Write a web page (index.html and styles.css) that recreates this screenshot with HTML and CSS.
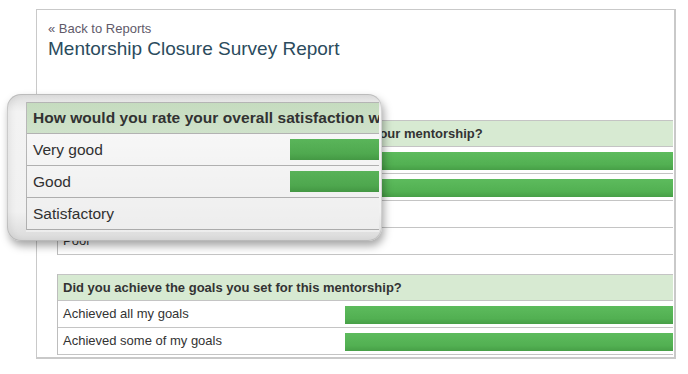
FILE: index.html
```html
<!DOCTYPE html>
<html lang="en">
<head>
  <meta charset="UTF-8">
  <title>Mentorship Closure Survey Report</title>
  <link rel="stylesheet" href="styles.css">
</head>
<body>
  <div class="report">
    <div class="report-head">
      <a class="back-link" href="#">&laquo; Back to Reports</a>
      <h1>Mentorship Closure Survey Report</h1>
    </div>

    <div class="question">
      <div class="question-title">How would you rate your overall satisfaction with your mentorship?</div>
      <div class="answer"><span>Very good</span><div class="bar-track"><div class="bar" style="width:100%"></div></div></div>
      <div class="answer"><span>Good</span><div class="bar-track"><div class="bar" style="width:100%"></div></div></div>
      <div class="answer"><span>Satisfactory</span><div class="bar-track"></div></div>
      <div class="answer"><span>Poor</span><div class="bar-track"></div></div>
    </div>

    <div class="question">
      <div class="question-title">Did you achieve the goals you set for this mentorship?</div>
      <div class="answer"><span>Achieved all my goals</span><div class="bar-track"><div class="bar" style="width:100%"></div></div></div>
      <div class="answer"><span>Achieved some of my goals</span><div class="bar-track"><div class="bar" style="width:100%"></div></div></div>
    </div>
  </div>

  <!-- zoomed callout over the first question -->
  <div class="magnifier">
    <div class="lens">
      <div class="question big">
        <div class="question-title">How would you rate your overall satisfaction with your mentorship?</div>
        <div class="answer"><span>Very good</span><div class="bar-track"><div class="bar" style="width:100%"></div></div></div>
        <div class="answer"><span>Good</span><div class="bar-track"><div class="bar" style="width:100%"></div></div></div>
        <div class="answer"><span>Satisfactory</span><div class="bar-track"></div></div>
      </div>
    </div>
  </div>
</body>
</html>
```

FILE: styles.css
```css
body {
  margin: 0;
  font-family: 'Liberation Sans', Arial, sans-serif;
  background: #fff;
  color: #333;
}

.report {
  box-sizing: border-box;
  width: 640px;
  height: 350px;
  margin: 9px 0 0 36px;
  border: 1px solid #c9c9c9;
  border-right-width: 2px;
  border-bottom-width: 2px;
  background: #fff;
}

.report-head {
  padding: 11px 0 0 11px;
  height: 99px;
}

.back-link {
  display: block;
  font-size: 13px;
  line-height: 15px;
  color: #615a6a;
  text-decoration: none;
}

h1 {
  margin: 2px 0 0;
  font-size: 19px;
  line-height: 22px;
  font-weight: normal;
  color: #2b4b5d;
}

.question {
  margin: 0 1px 19px 20px;
  border-left: 1px solid #bdbdbd;
  font-size: 13px;
}

.question-title {
  height: 25px;
  line-height: 25px;
  padding-left: 5px;
  border-top: 1px solid #c4c4c4;
  border-bottom: 1px solid #c4c4c4;
  background: #d7ead2;
  font-weight: bold;
  color: #333;
  white-space: nowrap;
  overflow: hidden;
}

.answer {
  display: grid;
  grid-template-columns: 287px 1fr;
  height: 26px;
  border-bottom: 1px solid #c4c4c4;
}

.answer span {
  padding-left: 5px;
  line-height: 26px;
  color: #333;
}

.bar-track {
  padding-top: 5px;
}

.bar {
  height: 18px;
  background: linear-gradient(to bottom, #5dbb5d, #52b052 70%, #479f47);
}

/* callout */

.magnifier {
  position: absolute;
  left: 7px;
  top: 94px;
  box-sizing: border-box;
  width: 375px;
  height: 147px;
  padding: 8px 3px 9px 19px;
  border-radius: 14px;
  background: linear-gradient(to bottom, #dcdcdc, #f3f3f3 12%, #f1f1f1 80%, #d9d9d9);
  box-shadow: 2px 5px 9px rgba(0,0,0,0.35), inset 0 0 0 1px rgba(0,0,0,0.12), inset 4px 0 6px rgba(0,0,0,0.06);
}

.lens {
  position: relative;
  height: 130px;
  overflow: hidden;
  background: #fff;
}

.lens::after {
  content: "";
  position: absolute;
  inset: 0;
  background: linear-gradient(to bottom, rgba(0,0,0,0.02), rgba(0,0,0,0.07));
}

.big {
  width: 600px;
  margin: 0;
  font-size: 15.5px;
}

.big .question-title {
  height: 30px;
  line-height: 30px;
  padding-left: 6px;
  letter-spacing: 0.05px;
  background: linear-gradient(to bottom, #c9e0c3, #d6e9d1);
  border-color: #b8b8b8;
}

.big .answer {
  grid-template-columns: 263px 1fr;
  height: 31px;
  border-color: #b8b8b8;
}

.big .answer span {
  padding-left: 6px;
  line-height: 31px;
}

.big .bar-track {
  padding-top: 5px;
}

.big .bar {
  height: 21px;
}
```
